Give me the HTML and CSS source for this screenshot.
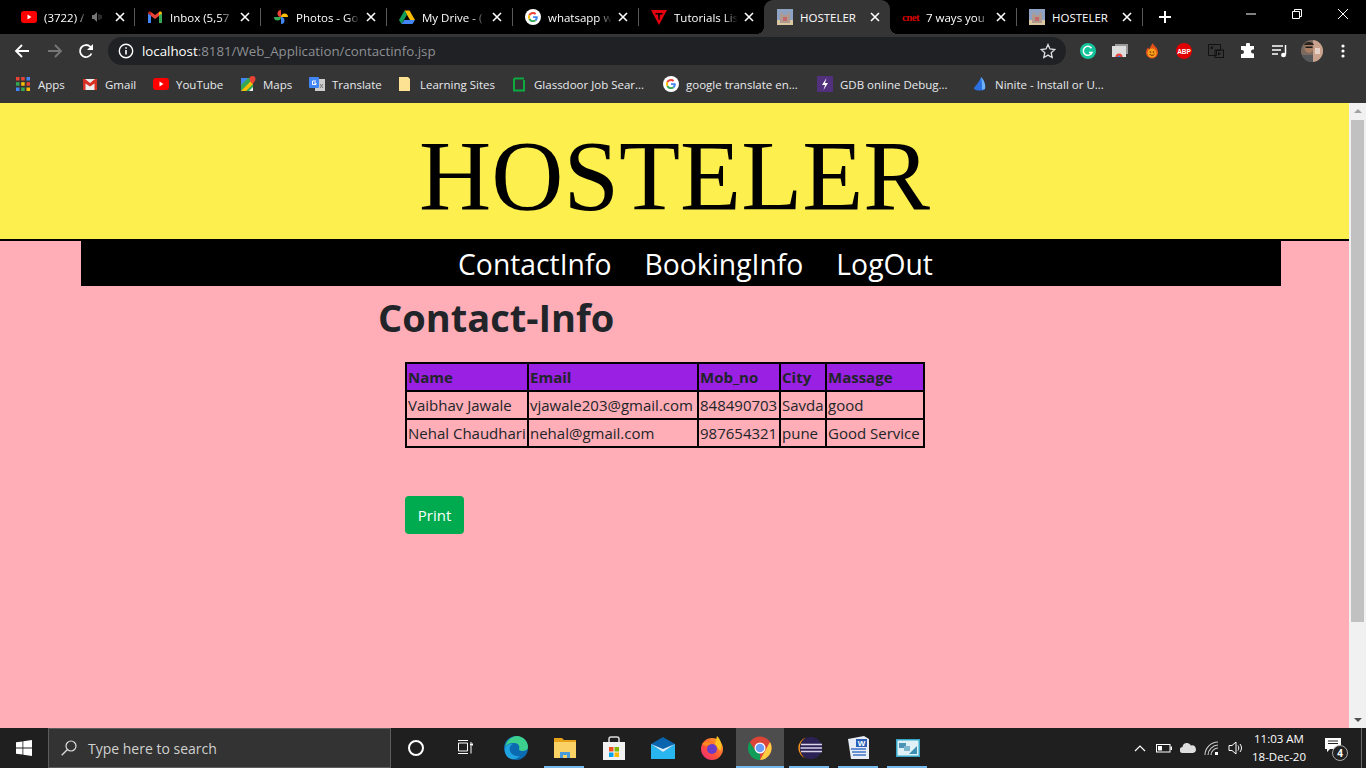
FILE: index.html
```html
<!DOCTYPE html>
<html lang="en">
<head>
  <meta charset="UTF-8">
  <title>HOSTELER</title>
  <link rel="stylesheet" href="styles.css">
</head>
<body>
  <svg class="sprites" width="0" height="0">
    <defs>
      <symbol id="i-youtube" viewBox="0 0 16 16">
        <rect x="0" y="2" width="16" height="12" rx="3" fill="#f00"/>
        <path d="M6.500 5.500v5l4-2.500z" fill="#fff"/>
      </symbol>
      <symbol id="i-gmail" viewBox="0 0 16 16">
        <path d="M1 14V4l3 2.300V14z" fill="#4285f4"/>
        <path d="M12 14V6.300L15 4v10z" fill="#34a853"/>
        <path d="M4 7V3l4 3 4-3v4L8 10z" fill="#ea4335"/>
        <path d="M1 4.500c0-2 2-2.500 3-1.500v3.500z" fill="#c5221f"/>
        <path d="M15 4.500c0-2-2-2.500-3-1.500v3.500z" fill="#fbbc04"/>
      </symbol>
      <symbol id="i-google" viewBox="0 0 16 16">
        <circle cx="8" cy="8" r="8" fill="#fff"/>
        <path d="M12.800 8.200c0-.4 0-.7-.1-1H8v1.900h2.700c-.1.700-.5 1.200-1 1.600l1.600 1.200c.9-.9 1.500-2.200 1.500-3.700z" fill="#4285f4"/>
        <path d="M8 13c1.300 0 2.400-.4 3.300-1.100l-1.600-1.200c-.4.300-1 .5-1.700.5-1.300 0-2.400-.9-2.800-2L3.600 10.400C4.400 12 6.100 13 8 13z" fill="#34a853"/>
        <path d="M5.200 9.200c-.2-.7-.2-1.600 0-2.400L3.600 5.600c-.8 1.500-.8 3.300 0 4.800z" fill="#fbbc04"/>
        <path d="M8 5c.7 0 1.400.3 1.900.8l1.400-1.400C10.400 3.500 9.300 3 8 3 6.100 3 4.400 4 3.600 5.600l1.600 1.200C5.600 5.800 6.700 5 8 5z" fill="#ea4335"/>
      </symbol>
      <symbol id="i-hostel" viewBox="0 0 16 16">
        <rect width="16" height="16" fill="#8ea3c4"/>
        <rect y="11" width="16" height="5" fill="#d8c7a0"/>
        <path d="M3 14V6l2-4 1 4h4l1-4 2 4v8z" fill="#b09a90"/>
        <rect x="6" y="8" width="4" height="4" fill="#c46a6a"/>
      </symbol>
      <symbol id="i-close" viewBox="0 0 10 10">
        <path d="M1 1l8 8M9 1L1 9" stroke="#fff" stroke-width="1.600" fill="none"/>
      </symbol>
    </defs>
  </svg>

  <div class="tabstrip">
    <div class="tab">
      <svg class="favicon"><use href="#i-youtube"/></svg>
      <span class="tab-title short">(3722) /</span>
      <svg class="tab-audio" viewBox="0 0 12 12"><path d="M0 4h2l3-3v10L2 8H0z" fill="#777"/><path d="M7 3v6M9 4v4" stroke="#555" stroke-width="1"/></svg>
      <svg class="tab-close"><use href="#i-close"/></svg>
    </div>
    <div class="tab">
      <svg class="favicon"><use href="#i-gmail"/></svg>
      <span class="tab-title">Inbox (5,57</span>
      <svg class="tab-close"><use href="#i-close"/></svg>
    </div>
    <div class="tab">
      <svg class="favicon" viewBox="0 0 16 16">
        <path d="M8 8V1a3.500 3.500 0 0 0 0 7z" fill="#ea4335"/>
        <path d="M8 8h7a3.500 3.500 0 0 0-7 0z" fill="#fbbc04"/>
        <path d="M8 8v7a3.500 3.500 0 0 0 0-7z" fill="#4285f4"/>
        <path d="M8 8H1a3.500 3.500 0 0 0 7 0z" fill="#34a853"/>
      </svg>
      <span class="tab-title">Photos - Go</span>
      <svg class="tab-close"><use href="#i-close"/></svg>
    </div>
    <div class="tab">
      <svg class="favicon" viewBox="0 0 16 16">
        <path d="M5.500 1.500h5L16 11h-5z" fill="#fbbc04"/>
        <path d="M5.500 1.500L0 11l2.500 4L8 5.800z" fill="#0f9d58"/>
        <path d="M2.500 15h11l2.500-4H5.300z" fill="#4285f4"/>
      </svg>
      <span class="tab-title">My Drive - (</span>
      <svg class="tab-close"><use href="#i-close"/></svg>
    </div>
    <div class="tab">
      <svg class="favicon"><use href="#i-google"/></svg>
      <span class="tab-title">whatsapp w</span>
      <svg class="tab-close"><use href="#i-close"/></svg>
    </div>
    <div class="tab tab-plain">
      <svg class="favicon" viewBox="0 0 16 16">
        <path d="M0 1h16L8 16z" fill="#e3000f"/>
        <path d="M4.500 4h7v1.500H9L8.500 11h-1L7 5.500H4.500z" fill="#000"/>
      </svg>
      <span class="tab-title">Tutorials Lis</span>
      <svg class="tab-close"><use href="#i-close"/></svg>
    </div>
    <div class="tab tab-active">
      <svg class="favicon"><use href="#i-hostel"/></svg>
      <span class="tab-title no-fade">HOSTELER</span>
      <svg class="tab-close"><use href="#i-close"/></svg>
    </div>
    <div class="tab">
      <span class="favicon cnet">cnet</span>
      <span class="tab-title">7 ways you</span>
      <svg class="tab-close"><use href="#i-close"/></svg>
    </div>
    <div class="tab">
      <svg class="favicon"><use href="#i-hostel"/></svg>
      <span class="tab-title no-fade">HOSTELER</span>
      <svg class="tab-close"><use href="#i-close"/></svg>
    </div>
    <svg class="new-tab" viewBox="0 0 12 12"><path d="M6 0v12M0 6h12" stroke="#fff" stroke-width="2"/></svg>
    <div class="window-controls">
      <svg viewBox="0 0 10 10"><path d="M0 5h10" stroke="#fff"/></svg>
      <svg viewBox="0 0 10 10"><path d="M.5 2.500h7v7h-7zM2.500 2.500v-2h7v7h-2" stroke="#fff" fill="none"/></svg>
      <svg viewBox="0 0 10 10"><path d="M0 0l10 10M10 0L0 10" stroke="#fff" fill="none"/></svg>
    </div>
  </div>

  <div class="toolbar">
    <svg class="nav-btn" viewBox="0 0 16 16"><path d="M15 8H2M8 2L2 8l6 6" stroke="#fff" stroke-width="1.800" fill="none"/></svg>
    <svg class="nav-btn" viewBox="0 0 16 16"><path d="M1 8h13M8 2l6 6-6 6" stroke="#777" stroke-width="1.800" fill="none"/></svg>
    <svg class="nav-btn" viewBox="0 0 16 16"><path d="M13.500 10.500A6 6 0 1 1 12.200 3.700L14 5.500" stroke="#fff" stroke-width="1.800" fill="none"/><path d="M15 1v6H9z" fill="#fff"/></svg>
    <div class="omnibox">
      <svg class="info-icon" viewBox="0 0 16 16"><circle cx="8" cy="8" r="6.700" stroke="#fff" stroke-width="1.400" fill="none"/><path d="M8 7v4.500M8 4.300v1.500" stroke="#fff" stroke-width="1.600"/></svg>
      <span class="url"><span class="url-host">localhost</span>:8181/Web_Application/contactinfo.jsp</span>
      <svg class="star" viewBox="0 0 16 16"><path d="M8 1.500l2 4.500 4.800.5-3.600 3.200 1 4.800L8 12.100l-4.200 2.400 1-4.800L1.200 6.500 6 6z" stroke="#ddd" stroke-width="1.300" fill="none"/></svg>
    </div>
    <div class="extensions">
      <svg viewBox="0 0 16 16"><circle cx="8" cy="8" r="8" fill="#15c39a"/><path d="M11.500 5.200A4.500 4.500 0 1 0 12 9.500H9" stroke="#fff" stroke-width="1.500" fill="none"/></svg>
      <svg viewBox="0 0 16 16"><rect x="3" y="1" width="13" height="10" fill="#999"/><rect x="0" y="3" width="14" height="11" fill="#ddd"/><path d="M3.500 14a3.500 3.500 0 0 1 7 0z" fill="#ea4335"/><path d="M5.500 14a1.500 1.500 0 0 1 3 0z" fill="#4285f4"/></svg>
      <svg viewBox="0 0 16 16"><path d="M9 0c0 3 5 4 5 9.500a6 6 0 0 1-12 0c0-2.500 1-4 2.500-5 0 1 .5 1.500 1 1.500C6 4 7.500 2 9 0z" fill="#e8501a"/><circle cx="8" cy="10" r="4.500" fill="#f9a11b"/><circle cx="6.500" cy="9" r=".8" fill="#7a2b00"/><circle cx="9.500" cy="9" r=".8" fill="#7a2b00"/><path d="M5.500 11c.8 1.800 4.200 1.800 5 0" stroke="#7a2b00" fill="none"/></svg>
      <svg viewBox="0 0 16 16"><circle cx="8" cy="8" r="8" fill="#e00000"/><text x="8" y="10.500" class="abp-text">ABP</text></svg>
      <svg viewBox="0 0 16 16"><path d="M.5 1.500h12v6h-4v5h-8z" stroke="#111" fill="none"/><rect x="7" y="7" width="8.500" height="7.500" stroke="#111" fill="none"/><path d="M10 9v3.500l3-1.700z" fill="#111"/><path d="M3 4l2 2M3 6.500V4h2.500" stroke="#111" fill="none"/></svg>
      <svg viewBox="0 0 16 16"><path d="M6 1.500a2 2 0 0 1 4 0V3h4v3.500h-1a2 2 0 0 0 0 4h1V15H1v-4h1a2 2 0 0 0 0-4H1V3h5z" fill="#fff"/></svg>
      <svg viewBox="0 0 16 16"><path d="M0 3h11M0 7h9M0 11h6" stroke="#fff" stroke-width="1.500"/><path d="M13.500 2v9.500" stroke="#fff" stroke-width="1.500"/><ellipse cx="11.500" cy="12" rx="2.500" ry="2.200" fill="#fff"/></svg>
      <svg class="avatar" viewBox="0 0 22 22">
        <clipPath id="avatar-clip"><circle cx="11" cy="11" r="11"/></clipPath>
        <g clip-path="url(#avatar-clip)">
          <rect width="22" height="22" fill="#7b6a60"/>
          <rect x="12" width="10" height="22" fill="#c9a38e"/>
          <rect x="14" y="8" width="5" height="6" fill="#e6d3c5"/>
          <rect y="15" width="12" height="7" fill="#56585c"/>
          <ellipse cx="8" cy="8" rx="4.500" ry="5" fill="#a87d62"/>
          <path d="M3 5c1-4 9-4 10 0z" fill="#2a2320"/>
          <rect x="4.500" y="6.500" width="7" height="1.500" fill="#1a1a1a"/>
        </g>
      </svg>
      <svg class="dots" viewBox="0 0 4 16"><circle cx="2" cy="3" r="1.600" fill="#fff"/><circle cx="2" cy="8" r="1.600" fill="#fff"/><circle cx="2" cy="13" r="1.600" fill="#fff"/></svg>
    </div>
  </div>

  <div class="bookmarks">
    <a class="bookmark">
      <svg viewBox="0 0 16 16">
        <g fill="#ea4335"><rect x="1" y="1" width="3.500" height="3.500"/><rect x="6.200" y="1" width="3.500" height="3.500"/></g>
        <rect x="11.500" y="1" width="3.500" height="3.500" fill="#4285f4"/>
        <g fill="#34a853"><rect x="1" y="6.200" width="3.500" height="3.500"/></g>
        <rect x="6.200" y="6.200" width="3.500" height="3.500" fill="#fbbc04"/>
        <rect x="11.500" y="6.200" width="3.500" height="3.500" fill="#ea4335"/>
        <rect x="1" y="11.500" width="3.500" height="3.500" fill="#4285f4"/>
        <rect x="6.200" y="11.500" width="3.500" height="3.500" fill="#34a853"/>
        <rect x="11.500" y="11.500" width="3.500" height="3.500" fill="#fbbc04"/>
      </svg>
      Apps
    </a>
    <a class="bookmark">
      <svg viewBox="0 0 16 16"><rect x="1" y="3" width="14" height="11" fill="#eee"/><path d="M1 3h2l5 4 5-4h2v11h-2.500V7.500L8 10.500 3.500 7.500V14H1z" fill="#d93025"/></svg>
      Gmail
    </a>
    <a class="bookmark"><svg><use href="#i-youtube"/></svg>YouTube</a>
    <a class="bookmark">
      <svg viewBox="0 0 16 16"><path d="M1 2h12v13H1z" fill="#34a853"/><path d="M1 15L13 3v5l-7 7z" fill="#fbbc04"/><path d="M1 2h7L1 9z" fill="#4285f4"/><path d="M9 15l4-4v4z" fill="#eee"/><path d="M12.500 0a3 3 0 0 1 3 3c0 2-3 5-3 5s-3-3-3-5a3 3 0 0 1 3-3z" fill="#ea4335"/></svg>
      Maps
    </a>
    <a class="bookmark">
      <svg viewBox="0 0 16 16"><rect x="6" y="3" width="10" height="12" fill="#ccc"/><rect x="0" y="1" width="10" height="11" rx="1" fill="#4285f4"/><path d="M7 5H3.500v3.500H7V7H5" stroke="#fff" fill="none"/><path d="M11 8l3 4M14 8l-3 4" stroke="#777"/></svg>
      Translate
    </a>
    <a class="bookmark"><svg viewBox="0 0 16 16"><path d="M2 1h9l2 2v12H2z" fill="#fde293"/></svg>Learning Sites</a>
    <a class="bookmark"><svg viewBox="0 0 16 16"><path d="M3 2.500h10M3 2.500v12h10V4" stroke="#0caa41" stroke-width="2" fill="none"/></svg>Glassdoor Job Sear...</a>
    <a class="bookmark"><svg><use href="#i-google"/></svg>google translate en...</a>
    <a class="bookmark"><svg viewBox="0 0 16 16"><rect width="16" height="16" fill="#51307e"/><path d="M9.500 2L5 9h3l-1.500 5L11 7H8z" fill="#fff"/></svg>GDB online Debug...</a>
    <a class="bookmark"><svg viewBox="0 0 16 16"><path d="M9 1c3 3 5 8 4 12-2 2-8 2-11 0C2 10 6 9 9 1z" fill="#2b6fe0"/><path d="M9 1c3 3 5 8 4 12-1 .5-2 .8-3 .8C10 9 10 5 9 1z" fill="#6db1f5"/></svg>Ninite - Install or U...</a>
  </div>

  <div class="viewport">
    <div class="page">
      <header class="site-header">
        <h1 class="site-title">HOSTELER</h1>
      </header>
      <nav class="site-nav">
        <a href="#">ContactInfo</a>
        <a href="#">BookingInfo</a>
        <a href="#">LogOut</a>
      </nav>
      <main class="content">
        <h2 class="page-title">Contact-Info</h2>
        <table class="contact-table">
          <colgroup>
            <col class="col-name"><col class="col-email"><col class="col-mob"><col class="col-city"><col class="col-msg">
          </colgroup>
          <tr><th>Name</th><th>Email</th><th>Mob_no</th><th>City</th><th>Massage</th></tr>
          <tr><td>Vaibhav Jawale</td><td>vjawale203@gmail.com</td><td>848490703</td><td>Savda</td><td>good</td></tr>
          <tr><td>Nehal Chaudhari</td><td>nehal@gmail.com</td><td>987654321</td><td>pune</td><td>Good Service</td></tr>
        </table>
        <button class="print-btn">Print</button>
      </main>
    </div>
    <div class="scrollbar">
      <span class="arrow arrow-up"></span>
      <div class="track"><div class="thumb"></div></div>
      <span class="arrow arrow-down"></span>
    </div>
  </div>

  <div class="taskbar">
    <div class="start">
      <svg viewBox="0 0 16 16"><path d="M0 2.300l6.500-.9v6.200H0zM7.300 1.300L16 0v7.600H7.300zM0 8.400h6.500v6.200L0 13.700zM7.300 8.400H16V16l-8.700-1.300z" fill="#fff"/></svg>
    </div>
    <div class="search">
      <svg viewBox="0 0 16 16"><circle cx="10" cy="6" r="5" stroke="#ddd" stroke-width="1.200" fill="none"/><path d="M6.500 9.500L.7 15.300" stroke="#ddd" stroke-width="1.300"/></svg>
      <span>Type here to search</span>
    </div>
    <div class="task-cell">
      <span class="cortana"></span>
    </div>
    <div class="task-cell task-view">
      <svg class="icon-16" viewBox="0 0 16 16"><path d="M1.500 3h9v8h-9zM1 .5h10M1 13.500h10M14 2v1.500M14 5.500v8" stroke="#fff" fill="none"/><rect x="13" y="3.500" width="3" height="2" fill="#fff"/></svg>
    </div>
    <div class="task-cell">
      <svg viewBox="0 0 24 24"><circle cx="12" cy="12" r="12" fill="#0c6ab0"/><path d="M1 12C2 4 8 0 13 0c6 0 11 5 11 11 0 3-3 4-6 4-2 0-3-1-3-2 1-2 0-6-5-6C6 7 2 8 1 12z" fill="#3ccf8e"/><path d="M1 12c1-3 5-5 8-4-3 1-4 4-3 7s5 6 10 5c-2 2-6 4-9 3C3 22 0 17 1 12z" fill="#1fa2e0"/></svg>
    </div>
    <div class="task-cell open">
      <svg viewBox="0 0 24 24"><path d="M1 2h8l2 2h12v18H1z" fill="#e8a21a"/><rect x="1" y="6" width="22" height="16" fill="#fad165"/><path d="M7 22v-6h10v6h-3v-3h-4v3z" fill="#4a9bd9"/></svg>
    </div>
    <div class="task-cell">
      <svg viewBox="0 0 24 24"><path d="M7 6V3a2 2 0 0 1 2-2h6a2 2 0 0 1 2 2v3" stroke="#ddd" stroke-width="1.500" fill="none"/><rect x="1" y="6" width="22" height="18" fill="#f2f2f2"/><rect x="7" y="11" width="4.500" height="4.500" fill="#f25022"/><rect x="12.500" y="11" width="4.500" height="4.500" fill="#7fba00"/><rect x="7" y="16.500" width="4.500" height="4.500" fill="#00a4ef"/><rect x="12.500" y="16.500" width="4.500" height="4.500" fill="#ffb900"/></svg>
    </div>
    <div class="task-cell">
      <svg viewBox="0 0 24 24"><path d="M0 8l12-7 12 7v14H0z" fill="#0a64ad"/><path d="M0 8l12 8 12-8v15H0z" fill="#29b6f0"/><path d="M0 8l12 8 12-8-12 5z" fill="#d8eefb"/></svg>
    </div>
    <div class="task-cell">
      <svg viewBox="0 0 24 24"><defs><linearGradient id="fox" x1="1" y1="0" x2="0" y2="1"><stop offset="0" stop-color="#ffb41f"/><stop offset=".6" stop-color="#ff4f3a"/><stop offset="1" stop-color="#e6258c"/></linearGradient></defs><circle cx="12" cy="13" r="11" fill="url(#fox)"/><path d="M17 0c4 4 6 10 3 15L15 8z" fill="#ffc21f"/><circle cx="12" cy="13" r="5" fill="#6b3bc9"/><path d="M2 8c3-3 7-3 9 0L6 10z" fill="#ff8a1f"/></svg>
    </div>
    <div class="task-cell active">
      <svg viewBox="0 0 24 24"><circle cx="12" cy="12" r="11.500" fill="#db4437"/><path d="M12 24a12 12 0 0 1-10.400-18L7 14l5 4z" fill="#0f9d58"/><path d="M12 24l5-9 5-9a12 12 0 0 1-10 18z" fill="#ffcd40"/><circle cx="12" cy="12" r="5.500" fill="#fff"/><circle cx="12" cy="12" r="4.300" fill="#6a9ef5"/></svg>
    </div>
    <div class="task-cell open">
      <svg viewBox="0 0 24 24"><circle cx="13" cy="12" r="11" fill="#2c2255"/><path d="M8 1.500a11 11 0 0 0 0 21A12 12 0 0 1 8 1.500z" fill="#f7941e"/><path d="M3 8.500h21M2.500 12h22M3 15.500h21" stroke="#d9d4ea" stroke-width="1.500"/></svg>
    </div>
    <div class="task-cell open">
      <svg viewBox="0 0 24 24"><path d="M1 3l16-3 5 3v20H4z" fill="#e8edf5"/><rect x="9" y="3" width="11" height="8" fill="#2b5fb5"/><text x="14.500" y="10" class="word-w">W</text><path d="M4 13h15M5 16h14M6 19h13" stroke="#3f73c5" stroke-width="1.300"/></svg>
    </div>
    <div class="task-cell open">
      <svg viewBox="0 0 24 24"><rect x="0" y="3" width="24" height="18" fill="#34a7c9"/><rect x="1.500" y="4.500" width="21" height="15" fill="#dff1f7"/><rect x="3" y="7" width="7" height="5" fill="#4a93b5"/><rect x="8" y="10" width="6" height="5" fill="#7db7cf"/><path d="M13 18l8-8v8z" fill="#3b8fb3"/></svg>
    </div>
    <div class="tray">
      <svg class="tray-caret" viewBox="0 0 12 8"><path d="M1 7l5-5 5 5" stroke="#fff" stroke-width="1.200" fill="none"/></svg>
      <svg class="tray-icon" viewBox="0 0 16 16"><rect x=".5" y="4.500" width="13.500" height="7.500" stroke="#fff" fill="none"/><rect x="2" y="6" width="4" height="4.500" fill="#fff"/><rect x="14.500" y="6.500" width="1.500" height="3.500" fill="#fff"/></svg>
      <svg class="tray-icon" viewBox="0 0 16 16"><path d="M3 13a3 3 0 0 1-.5-6A4.500 4.500 0 0 1 11 5.500 3.800 3.800 0 0 1 13 13z" fill="#ddd"/></svg>
      <svg class="tray-icon" viewBox="0 0 16 16"><path d="M1 15C1 8 7 2 14 2M4 15c0-5 5-10 10-10M7 15c0-3.500 3.500-7 7-7" stroke="#ccc" stroke-width="1.100" fill="none"/><rect x="11" y="12" width="3" height="3" fill="#fff"/></svg>
      <svg class="tray-icon" viewBox="0 0 16 16"><path d="M1 5.500h3L8 2v12l-4-3.500H1z" stroke="#fff" fill="none"/><path d="M10 5.500c1 1.500 1 3.500 0 5M12 4c2 2.500 2 5.500 0 8" stroke="#fff" fill="none"/></svg>
      <div class="clock"><span>11:03 AM</span><span>18-Dec-20</span></div>
      <div class="notify">
        <svg viewBox="0 0 16 14"><path d="M0 0h16v11H5l-3 3v-3H0z" fill="#fff"/><path d="M3 3h10M3 5.500h10" stroke="#222"/></svg>
        <span class="notify-count">4</span>
      </div>
      <span class="show-desktop"></span>
    </div>
  </div>
</body>
</html>
```

FILE: styles.css
```css
* {
  box-sizing: border-box;
}

html, body {
  margin: 0;
  height: 100%;
  overflow: hidden;
}

body {
  display: flex;
  flex-direction: column;
  width: 1366px;
  height: 768px;
  font-family: "Open Sans", "Noto Sans", sans-serif;
  background: #ffadb6;
}

.sprites {
  position: absolute;
}

/* browser tabs */
.tabstrip {
  display: flex;
  align-items: center;
  height: 34px;
  padding-left: 8px;
  background: #000;
  color: #fff;
  font-size: 11.5px;
  flex: none;
}

.tab {
  display: flex;
  align-items: center;
  width: 126px;
  height: 34px;
  padding-left: 13px;
  flex: none;
  position: relative;
}

/* thin divider between tabs */
.tab::after {
  content: "";
  position: absolute;
  top: 8px;
  bottom: 8px;
  right: -1px;
  width: 1px;
  background: #5a5a5a;
}

.tab-plain::after {
  display: none;
}

.tab-active {
  background: #353535;
  border-radius: 9px 9px 0 0;
}

/* the curved feet of the selected tab */
.tab-active::before,
.tab-active::after {
  content: "";
  position: absolute;
  top: auto;
  bottom: 0;
  width: 8px;
  height: 8px;
}

.tab-active::before {
  left: -8px;
  background: radial-gradient(circle at 0 0, transparent 8px, #353535 8px);
}

.tab-active::after {
  right: -8px;
  background: radial-gradient(circle at 100% 0, transparent 8px, #353535 8px);
}

.favicon {
  width: 16px;
  height: 16px;
  flex: none;
}

.cnet {
  width: 17px;
  margin-left: -1px;
  font-family: "Liberation Serif", serif;
  font-size: 11px;
  font-weight: 700;
  line-height: 16px;
  color: #d40000;
  letter-spacing: -0.6px;
}

.tab-title {
  width: 67px;
  margin-left: 7px;
  overflow: hidden;
  white-space: nowrap;
  -webkit-mask-image: linear-gradient(to right, #000 75%, transparent 95%);
  mask-image: linear-gradient(to right, #000 75%, transparent 95%);
}

.tab-title.short {
  width: 45px;
}

.tab-title.no-fade {
  -webkit-mask-image: none;
  mask-image: none;
}

.tab-audio {
  width: 12px;
  height: 12px;
  margin-left: 3px;
  margin-right: 3px;
  flex: none;
}

.tab-close {
  width: 10px;
  height: 10px;
  margin-left: 3px;
  flex: none;
}

.tab-audio + .tab-close {
  margin-left: 8px;
}

.new-tab {
  width: 12px;
  height: 12px;
  margin-left: 17px;
}

.window-controls {
  display: flex;
  gap: 36px;
  margin-left: auto;
  padding-right: 18px;
  padding-bottom: 6px;
}

.window-controls svg {
  width: 10px;
  height: 10px;
}

/* address bar row */
.toolbar {
  display: flex;
  align-items: center;
  height: 33px;
  padding: 0 0 0 14px;
  background: #353535;
  flex: none;
}

.nav-btn {
  width: 16px;
  height: 16px;
  margin-right: 17px;
}

.nav-btn:nth-child(2) {
  margin-right: 15px;
}

.nav-btn:nth-child(3) {
  margin-right: 14px;
}

.omnibox {
  display: flex;
  align-items: center;
  width: 958px;
  height: 28px;
  padding: 0 10px 0 10px;
  border-radius: 14px;
  background: #202124;
  font-size: 13.3px;
  color: #8d9094;
}

.info-icon {
  width: 16px;
  height: 16px;
  margin-right: 8px;
}

.url-host {
  color: #fff;
}

.star {
  width: 16px;
  height: 16px;
  margin-left: auto;
}

.extensions {
  display: flex;
  align-items: center;
  padding-left: 14px;
  gap: 16px;
}

.extensions svg {
  width: 16px;
  height: 16px;
  flex: none;
}

.extensions .avatar {
  width: 22px;
  height: 22px;
  margin: 0 -3px;
}

.extensions .dots {
  width: 4px;
  margin-left: 5px;
}

.abp-text {
  font-family: "Liberation Sans", sans-serif;
  font-size: 6.5px;
  font-weight: 700;
  fill: #fff;
  text-anchor: middle;
}

/* bookmarks */
.bookmarks {
  display: grid;
  grid-template-columns: 67px 71px 87px 69px 88px 114px 152px 154px 155px 1fr;
  align-items: center;
  height: 36px;
  padding: 0 0 2px 15px;
  background: #353535;
  color: #e8eaed;
  font-size: 11.5px;
  flex: none;
}

.bookmark {
  display: flex;
  align-items: center;
  gap: 7px;
  white-space: nowrap;
}

.bookmark svg {
  width: 16px;
  height: 16px;
  flex: none;
}

/* page area */
.viewport {
  display: flex;
  height: 625px;
  flex: none;
}

.page {
  flex: 1;
  min-width: 0;
  background: #ffadb6;
  color: #212529;
}

.site-header {
  display: flex;
  align-items: center;
  justify-content: center;
  height: 138px;
  padding-top: 10px;
  background: #fdef4e;
  border-bottom: 2px solid #000;
}

.site-title {
  margin: 0;
  font-family: "Liberation Serif", "Times New Roman", serif;
  font-size: 100px;
  font-weight: 400;
  line-height: 1;
  color: #000;
}

.site-nav {
  display: flex;
  justify-content: center;
  align-items: center;
  gap: 33px;
  height: 45px;
  margin: 0 68px 0 81px;
  padding-left: 29px;
  background: #000;
  font-size: 28.3px;
}

.site-nav a {
  color: #fff;
  text-decoration: none;
}

.content {
  padding-left: 378px;
}

.page-title {
  margin: 7px 0 21px;
  font-size: 38px;
  font-weight: 700;
  line-height: 48px;
  color: #212529;
}

.contact-table {
  table-layout: fixed;
  width: 518px;
  margin-left: 27px;
  border-collapse: collapse;
  font-size: 15px;
  border: 2px solid #000;
}

.col-name { width: 122px; }
.col-email { width: 170px; }
.col-mob { width: 82px; }
.col-city { width: 46px; }
.col-msg { width: 98px; }

.contact-table th,
.contact-table td {
  height: 28px;
  padding: 0 1px;
  border: 2px solid #000;
  text-align: left;
  white-space: nowrap;
  overflow: hidden;
}

.contact-table th {
  background: #9a20e3;
  font-weight: 700;
}

.print-btn {
  display: block;
  width: 59px;
  height: 38px;
  margin: 48px 0 0 27px;
  padding: 0;
  border: none;
  border-radius: 4px;
  background: #00ab4f;
  color: #fff;
  font-family: inherit;
  font-size: 15px;
}

/* fake scrollbar, the picture shows one */
.scrollbar {
  display: flex;
  flex-direction: column;
  align-items: center;
  width: 17px;
  background: #f1f1f1;
  flex: none;
}

.arrow {
  width: 0;
  height: 0;
  margin: 6px 0;
  border-left: 4px solid transparent;
  border-right: 4px solid transparent;
}

.arrow-up {
  border-bottom: 4px solid #a3a3a3;
}

.arrow-down {
  border-top: 4px solid #505050;
}

.track {
  flex: 1;
  width: 100%;
  display: flex;
  justify-content: center;
}

.thumb {
  width: 13px;
  height: 502px;
  margin-top: 1px;
  background: #c1c1c1;
}

/* windows taskbar */
.taskbar {
  display: flex;
  align-items: center;
  height: 40px;
  background: #1f1f1f;
  flex: none;
}

.start {
  display: flex;
  justify-content: center;
  width: 48px;
}

.start svg {
  width: 16px;
  height: 16px;
}

.search {
  display: flex;
  align-items: center;
  width: 343px;
  height: 40px;
  padding-left: 12px;
  background: #333;
  border: 1px solid #5c5c5c;
  color: #d0d0d0;
  font-size: 14px;
}

.search svg {
  width: 16px;
  height: 16px;
  margin-right: 11px;
}

.task-cell {
  display: flex;
  align-items: center;
  justify-content: center;
  width: 49px;
  height: 40px;
  flex: none;
  position: relative;
}

.task-view {
  margin-right: 2px;
}

.task-cell svg {
  width: 24px;
  height: 24px;
}

.task-cell .icon-16 {
  width: 16px;
  height: 16px;
}

.task-cell.open::after,
.task-cell.active::after {
  content: "";
  position: absolute;
  left: 4px;
  right: 5px;
  bottom: 0;
  height: 2px;
  background: #76b9ed;
}

.task-cell.active {
  width: 48px;
  margin-right: 1px;
  background: #4d4d4d;
}

.task-cell.active::after {
  left: 0;
  right: 0;
}

.cortana {
  width: 16px;
  height: 16px;
  border: 2px solid #fff;
  border-radius: 50%;
}

.tray {
  display: flex;
  align-items: center;
  margin-left: auto;
  height: 40px;
  color: #fff;
}

.tray-caret {
  width: 12px;
  height: 8px;
  margin-right: 2px;
}

.tray-icon {
  width: 16px;
  height: 16px;
  margin-left: 8px;
}

.clock {
  display: flex;
  flex-direction: column;
  align-items: center;
  width: 66px;
  margin-left: 2px;
  font-size: 11.5px;
  line-height: 18px;
}

.notify {
  width: 24px;
  height: 24px;
  margin-left: 13px;
  position: relative;
}

.notify svg {
  width: 16px;
  height: 14px;
  display: block;
  margin-top: 2px;
}

.notify-count {
  position: absolute;
  right: 1px;
  bottom: -1px;
  width: 16px;
  height: 16px;
  border: 1px solid #aaa;
  border-radius: 50%;
  background: #222;
  font-size: 10px;
  font-weight: 700;
  line-height: 14px;
  text-align: center;
}

.show-desktop {
  width: 1px;
  height: 40px;
  margin-left: 12px;
  margin-right: 4px;
  background: #6a6a6a;
}

.word-w {
  font-family: "Liberation Sans", sans-serif;
  font-size: 8px;
  font-weight: 700;
  fill: #fff;
  text-anchor: middle;
}
```
